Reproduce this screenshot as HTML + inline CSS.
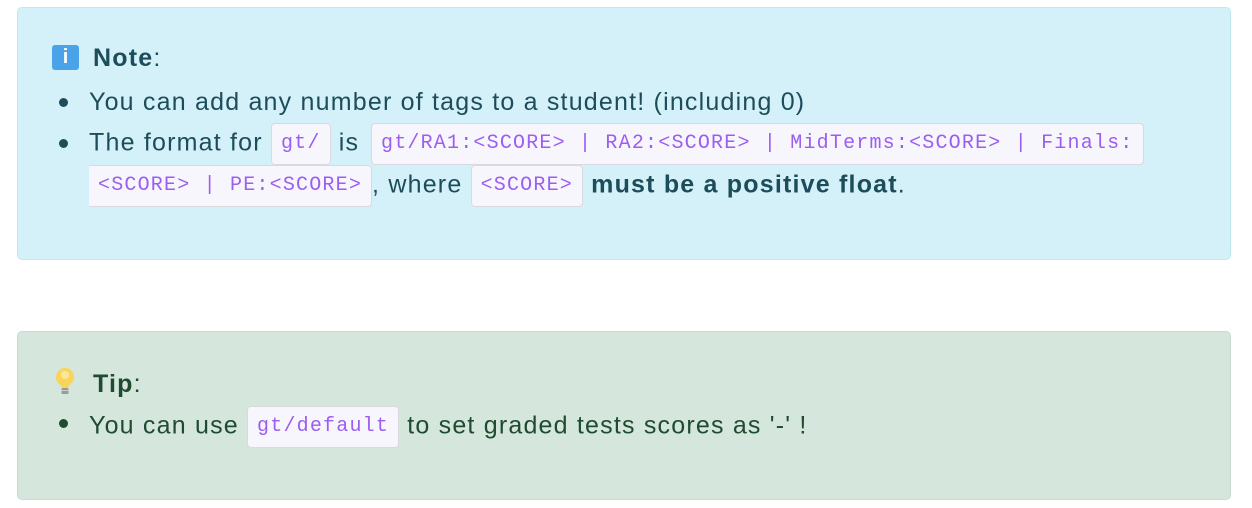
<!DOCTYPE html>
<html><head><style>
body{margin:0;width:1252px;height:508px;background:#fff;font-family:"Liberation Sans","DejaVu Sans",sans-serif;position:relative;overflow:hidden}
.box{position:absolute;left:17px;width:1212px;border-radius:5px;border:1px solid}
.note{top:7px;height:251px;background:#d4f1f9;border-color:#bfe8f3;color:#1d4d5b}
.tip{top:331px;height:167px;background:#d5e6dd;border-color:#c3dccf;color:#1f4b2f}
.l{position:absolute;font-size:25px;letter-spacing:1.2px;white-space:nowrap;line-height:30px}
.b{position:absolute;width:9px;height:9px;border-radius:50%}
code{font-family:"Liberation Mono","DejaVu Sans Mono",monospace;font-size:20px;letter-spacing:1.2px;color:#9b5ef0;background:#f8f6fd;border:1px solid #d9d9de;border-radius:4px;padding:7px 9px;display:inline-block;line-height:26px;vertical-align:middle}
</style></head><body>
<div class="box note">
<div style="position:absolute;left:34px;top:37px;width:27px;height:25px;background:#4aa3e8;border-radius:3px;color:#fff;font-weight:bold;font-size:20px;text-align:center;line-height:25px">i</div>
<div class="l" style="left:75px;top:35px"><b>Note</b>:</div>
<div class="b" style="left:41px;top:90px;background:#1d4d5b"></div>
<div class="l" style="left:71px;top:79px">You can add any number of tags to a student! (including 0)</div>
<div class="b" style="left:41px;top:131px;background:#1d4d5b"></div>
<div class="l" style="left:71px;top:115px">The format for <code>gt/</code> is <code style="position:absolute;left:282px;top:0;">gt/RA1:&lt;SCORE&gt; | RA2:&lt;SCORE&gt; | MidTerms:&lt;SCORE&gt; | Finals:</code></div>
<div class="l" style="left:71px;top:157px"><code style="border-radius:0 4px 4px 0;border-left:none">&lt;SCORE&gt; | PE:&lt;SCORE&gt;</code>, where <code>&lt;SCORE&gt;</code> <b>must be a positive float</b>.</div>
</div>
<div class="box tip">
<svg style="position:absolute;left:36px;top:35px" width="22" height="30" viewBox="0 0 22 30">
<circle cx="11" cy="10" r="9" fill="#f8d55a"/><path d="M5 15 L8 21 H14 L17 15Z" fill="#f8d55a"/>
<circle cx="11" cy="8" r="4" fill="#fbe79a"/>
<rect x="7.5" y="21" width="7" height="6" rx="1" fill="#9a9a9a"/><rect x="7.5" y="23" width="7" height="1" fill="#ccc"/>
</svg>
<div class="l" style="left:75px;top:37px"><b>Tip</b>:</div>
<div class="b" style="left:41px;top:87px;background:#1f4b2f"></div>
<div class="l" style="left:71px;top:74px">You can use <code>gt/default</code> to set graded tests scores as '-' !</div>
</div>
</body></html>
